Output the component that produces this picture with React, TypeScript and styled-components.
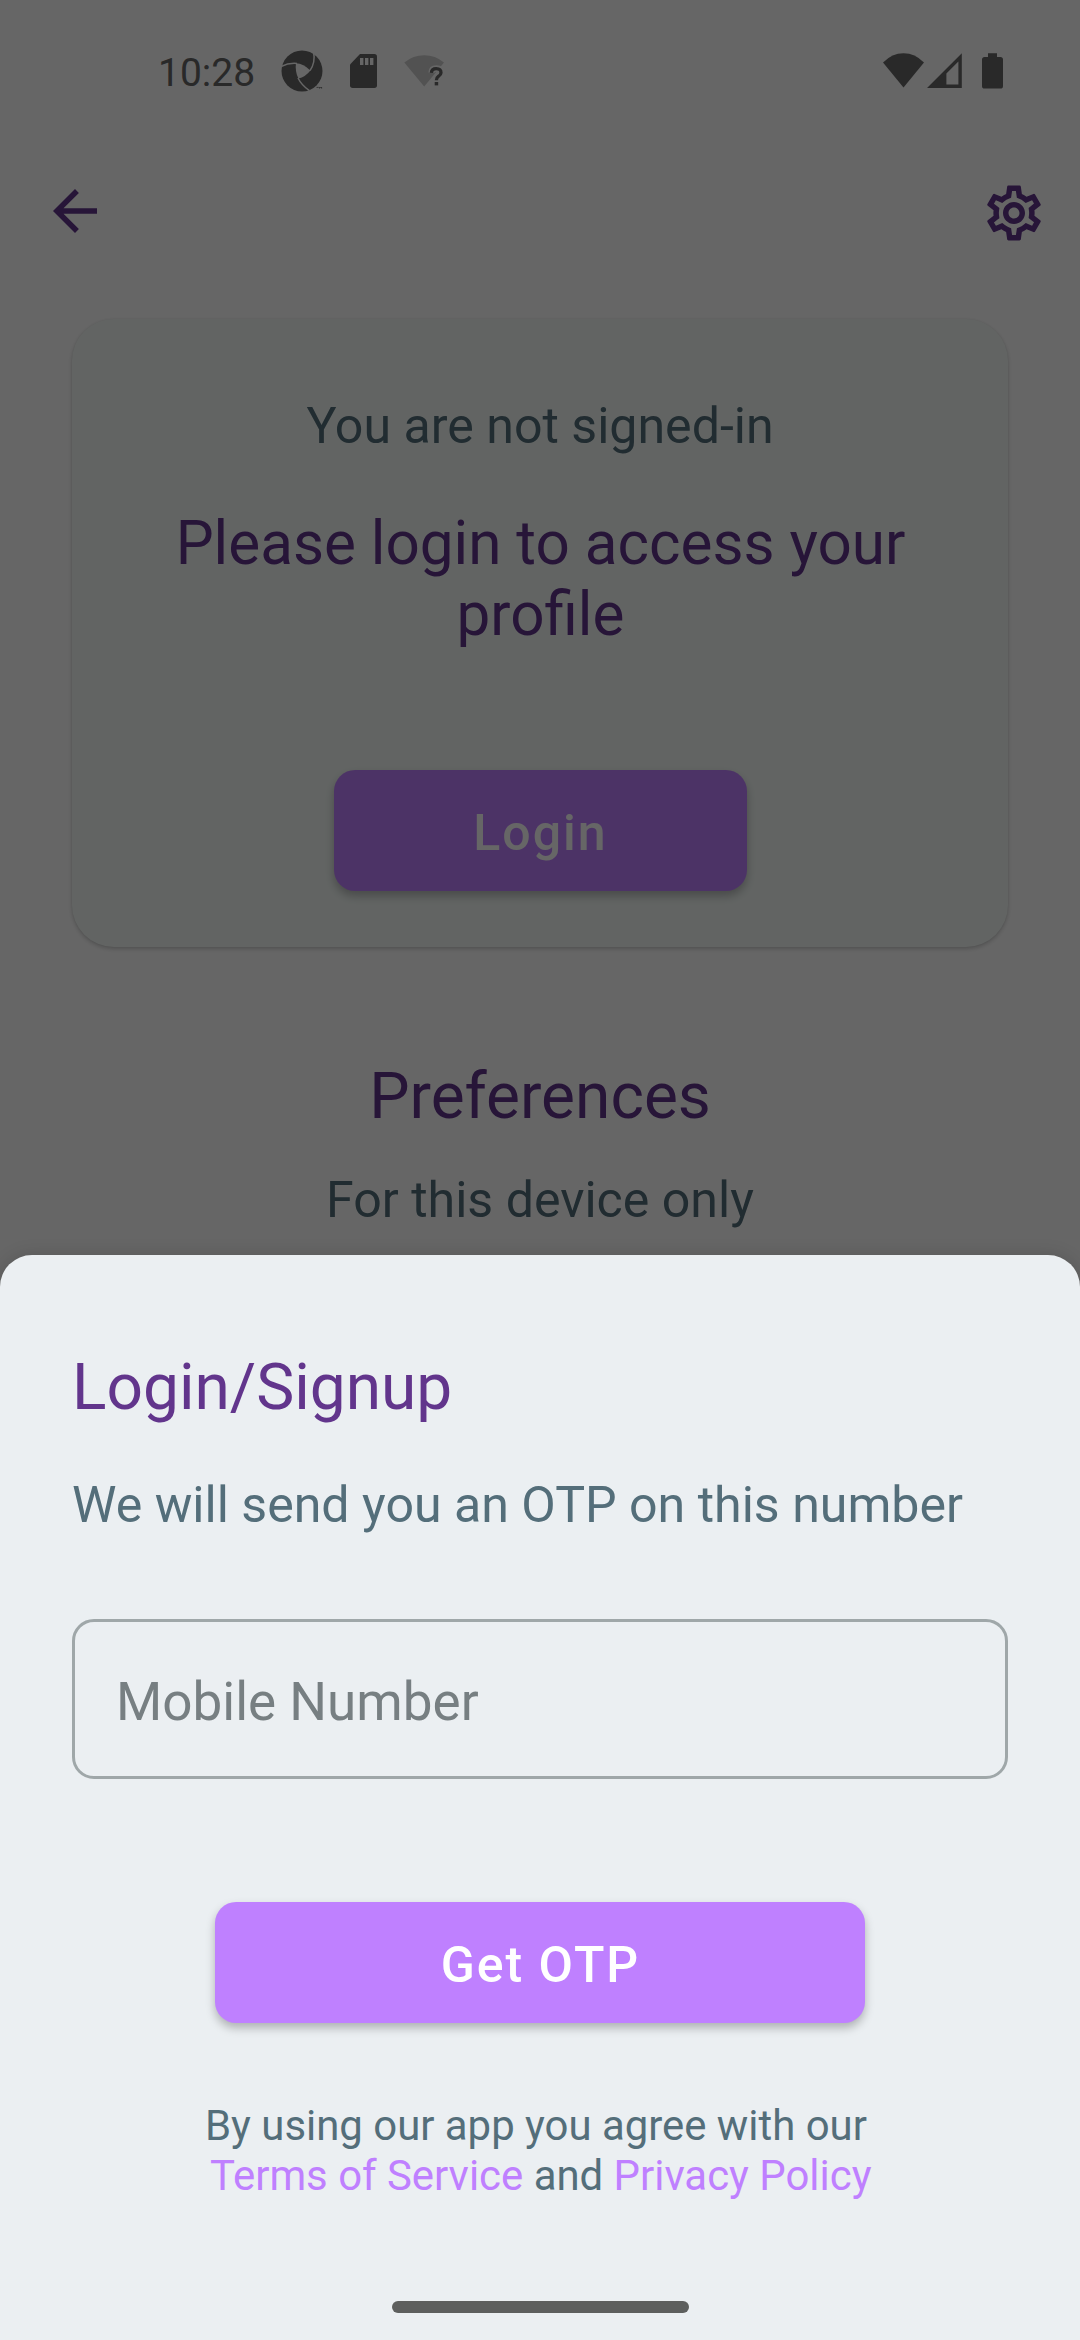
import React from "react";
import styled, { createGlobalStyle } from "styled-components";
import { MdArrowBack, MdOutlineSettings } from "react-icons/md";

const color = {
  page: "#ffffff",
  card: "#f5fbf8",
  sheet: "#ebeff2",
  title: "#62358c",
  body: "#546e7a",
  accent: "#bf80ff",
  system: "#666666",
  systemFaint: "#cdcdcd",
  hint: "#777f82",
  outline: "#9fa7a9",
};

const GlobalStyle = createGlobalStyle`
  * { box-sizing: border-box; }
  body {
    margin: 0;
    background: ${color.page};
    font-family: Roboto, "Noto Sans", sans-serif;
  }
`;

const Screen = styled.div`
  position: relative;
  width: 1080px;
  height: 2340px;
  overflow: hidden;
  background: ${color.page};
`;

const StatusBar = styled.header`
  display: flex;
  align-items: center;
  justify-content: space-between;
  height: 142px;
  padding: 0 77px 0 157px;
`;

const StatusGroup = styled.div<{ $gap: number }>`
  display: flex;
  align-items: center;
  gap: ${(p) => p.$gap}px;

  svg {
    display: block;
    flex: none;
  }
`;

const Clock = styled.span`
  width: 97px;
  padding: 4px 0 0 1px;
  color: ${color.system};
  font-size: 39px;
  line-height: 46px;
  white-space: nowrap;
`;

const BatterySlot = styled.span`
  margin-left: 17px;
`;

const Toolbar = styled.nav`
  display: flex;
  align-items: center;
  justify-content: space-between;
  height: 138px;
  padding: 0 33px 0 42px;
`;

const IconButton = styled.button<{ $drop?: number }>`
  display: flex;
  margin: ${(p) => p.$drop ?? 0}px 0 0;
  padding: 0;
  border: 0;
  background: none;
  color: ${color.title};
`;

const Card = styled.section`
  display: flex;
  flex-direction: column;
  align-items: center;
  height: 628px;
  margin: 39px 72px 0;
  padding-top: 77px;
  border-radius: 42px;
  background: ${color.card};
  box-shadow: 0 2px 4px rgba(0, 0, 0, 0.2), 0 0 2px rgba(0, 0, 0, 0.06);
`;

const BodyText = styled.p`
  margin: 0;
  color: ${color.body};
  font-size: 50.1px;
  line-height: 60px;
  white-space: nowrap;
`;

const Prompt = styled.h2`
  width: 780px;
  margin: 52px 0 120px;
  padding-left: 1px;
  color: ${color.title};
  font-size: 60.2px;
  font-weight: 400;
  line-height: 71px;
  text-align: center;
`;

const Heading = styled.h1`
  margin: 0;
  padding-top: 1px;
  color: ${color.title};
  font-size: 64px;
  font-weight: 400;
  line-height: 75px;
  white-space: nowrap;
`;

const Button = styled.button<{ $width: number }>`
  flex: none;
  width: ${(p) => p.$width}px;
  height: 121px;
  padding: 5px 0 0 1px;
  border: 0;
  border-radius: 21px;
  background: ${color.accent};
  box-shadow: 0 5px 10px rgba(0, 0, 0, 0.26);
  color: #ffffff;
  font-family: inherit;
  font-size: 50px;
  font-weight: 500;
  letter-spacing: 2px;
  line-height: 58px;
`;

const Preferences = styled.section`
  display: flex;
  flex-direction: column;
  align-items: center;
  gap: 36px;
  margin-top: 111px;
`;

const Scrim = styled.div`
  position: absolute;
  inset: 0;
  display: flex;
  flex-direction: column;
  justify-content: flex-end;
  background: rgba(0, 0, 0, 0.6);
`;

const Sheet = styled.section`
  display: flex;
  flex-direction: column;
  height: 1085px;
  padding: 94px 72px 27px;
  border-radius: 32px 32px 0 0;
  background: ${color.sheet};
  box-shadow: 0 0 18px rgba(0, 0, 0, 0.14);
`;

const SheetHeader = styled.div`
  display: flex;
  flex-direction: column;
  gap: 50px;
`;

const Field = styled.div`
  display: flex;
  align-items: center;
  height: 160px;
  margin-top: 84px;
  padding: 6px 41px 0;
  border: 3px solid ${color.outline};
  border-radius: 22px;
  color: ${color.hint};
  font-size: 53px;
  line-height: 62px;
`;

const Action = styled.div`
  display: flex;
  justify-content: center;
  margin-top: 123px;
`;

const Legal = styled.div`
  display: flex;
  flex-direction: column;
  gap: 1px;
  margin-top: 78px;
  padding-left: 133px;
`;

const LegalLine = styled.div<{ $indent?: number }>`
  padding-left: ${(p) => p.$indent ?? 0}px;
  color: ${color.body};
  font-size: 41.9px;
  line-height: 49px;
  white-space: nowrap;
`;

const Link = styled.a`
  color: ${color.accent};
`;

const HomeHandle = styled.div`
  width: 297px;
  height: 12px;
  margin: auto auto 0;
  border-radius: 6px;
  background: #5d5f5e;
`;

const ApertureIcon = () => (
  <svg width="42" height="42" viewBox="0 0 42 42">
    <circle cx="21" cy="21" r="20.5" fill={color.system} />
    <path d="M15 13.2Q22.5 13.6 29.4 20.4Q24.5 26.8 17.4 28.6Q13.8 21 15 13.2Z" fill={color.page} />
    <g fill="none" stroke={color.page} strokeWidth="1.5">
      <path d="M0 16.6Q7.5 12.6 16 13.4" />
      <path d="M32.6 2Q34.6 12.5 29 20.6" />
      <path d="M17 28Q20.5 35.2 28.4 40.6" />
    </g>
    <path d="M35.5 37.4h2.2M38.6 38.6v-1.6l1 1 1-1v1.6" fill="none" stroke={color.system} strokeWidth="0.8" />
  </svg>
);

const SdCardIcon = () => (
  <svg width="27" height="34" viewBox="0 0 27 34">
    <path d="M10 0H24.3Q27 0 27 2.7V31.3Q27 34 24.3 34H2.7Q0 34 0 31.3V10.4Z" fill={color.system} />
    <path d="M10 4h3.4v7H10zM15 4h3.4v7H15zM20 4h3.4v7H20z" fill={color.page} />
  </svg>
);

const WifiUnknownIcon = () => (
  <svg width="41" height="32" viewBox="0 0 41 32">
    <path d="M0.3 7.6Q9 0.3 20.2 0.3T40 7.6L20.2 31.6Z" fill={color.systemFaint} />
    <g fill="none">
      <path d="M27.6 17.6Q27.8 13.6 32.4 13.6Q37 13.8 37 17.6Q37 19.7 34.4 21.4Q32.4 22.7 32.4 25M32.4 27v3.4" stroke={color.page} strokeWidth="6.5" />
      <path d="M27.4 17.8Q27.6 13.7 32.2 13.7Q37 13.8 37 17.7Q37 19.7 34.4 21.4Q32.4 22.7 32.4 25.2" stroke={color.system} strokeWidth="3.3" />
    </g>
    <path d="M30.7 27h3.5v3.4h-3.5z" fill={color.system} />
  </svg>
);

const WifiIcon = () => (
  <svg width="41" height="36" viewBox="0 0 41 36">
    <path d="M0 9.6Q9 0.3 20.5 0.3T41 9.6L20.5 34.4Z" fill={color.system} />
  </svg>
);

const SignalIcon = () => (
  <svg width="35" height="36" viewBox="0 0 35 36">
    <path d="M34.8 0.2V35H0ZM31.4 8.6L19.4 20.6V31.4H31.4Z" fill={color.system} fillRule="evenodd" />
  </svg>
);

const BatteryIcon = () => (
  <svg width="21" height="36" viewBox="0 0 21 36">
    <path
      d="M6 0.2h9V4h3.4Q21 4 21 6.6V33Q21 35.6 18.4 35.6H2.6Q0 35.6 0 33V6.6Q0 4 2.6 4H6Z"
      fill={color.system}
    />
  </svg>
);

export default function App() {
  return (
    <>
      <GlobalStyle />
      <Screen>
        <StatusBar>
          <StatusGroup $gap={27}>
            <Clock>10:28</Clock>
            <ApertureIcon />
            <SdCardIcon />
            <WifiUnknownIcon />
          </StatusGroup>
          <StatusGroup $gap={3}>
            <WifiIcon />
            <SignalIcon />
            <BatterySlot>
              <BatteryIcon />
            </BatterySlot>
          </StatusGroup>
        </StatusBar>

        <Toolbar>
          <IconButton aria-label="Back">
            <MdArrowBack size={66} />
          </IconButton>
          <IconButton aria-label="Settings" $drop={4}>
            <MdOutlineSettings size={66} />
          </IconButton>
        </Toolbar>

        <Card>
          <BodyText>You are not signed-in</BodyText>
          <Prompt>Please login to access your profile</Prompt>
          <Button $width={413}>Login</Button>
        </Card>

        <Preferences>
          <Heading>Preferences</Heading>
          <BodyText>For this device only</BodyText>
        </Preferences>

        <Scrim>
          <Sheet>
            <SheetHeader>
              <Heading>Login/Signup</Heading>
              <BodyText>We will send you an OTP on this number</BodyText>
            </SheetHeader>
            <Field>Mobile Number</Field>
            <Action>
              <Button $width={650}>Get OTP</Button>
            </Action>
            <Legal>
              <LegalLine>By using our app you agree with our</LegalLine>
              <LegalLine $indent={5}>
                <Link>Terms of Service</Link> and <Link>Privacy Policy</Link>
              </LegalLine>
            </Legal>
            <HomeHandle />
          </Sheet>
        </Scrim>
      </Screen>
    </>
  );
}
